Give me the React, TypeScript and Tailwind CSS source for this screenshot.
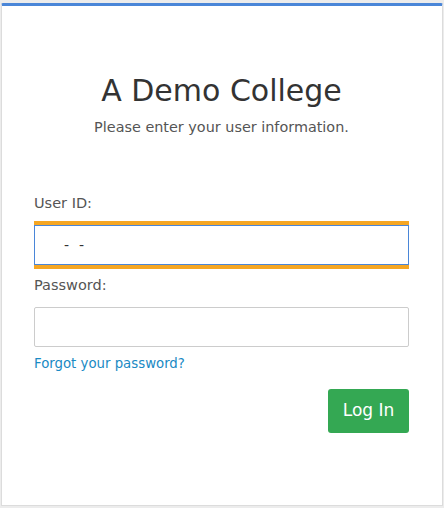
import React from 'react';

const App: React.FC = () => {
  return (
    <div className="min-h-screen bg-[#ececec] px-[1px] pt-[3px] pb-[2px] font-['DejaVu_Sans',Verdana,sans-serif]">
      <div className="h-[503px] bg-white border border-[#dcdcdc] border-t-[3px] border-t-[#4a86d8] rounded-t-[2px] pl-[32px] pr-[33px]">
        <div className="text-center">
          <h1 className="mt-[65px] text-[30px] leading-[40px] text-[#333]">A Demo College</h1>
          <p className="mt-[7px] text-[14.4px] leading-[18px] text-[#555]">Please enter your user information.</p>
        </div>

        {/* User ID */}
        <label className="block mt-[58px] text-[14.5px] leading-[18px] text-[#555]">User ID:</label>
        <div className="mt-[9px] h-[48px] py-[4px] bg-[#f5a623]">
          <div className="h-full bg-white border border-[#4a86d8] px-[12px] flex items-center text-[14px] text-[#333]">
            <span className="ml-[17px]">-</span>
            <span className="ml-[10px]">-</span>
          </div>
        </div>

        {/* Password */}
        <label className="block mt-[7px] text-[14.5px] leading-[18px] text-[#555]">Password:</label>
        <input
          type="password"
          className="block mt-[13px] w-full h-[40px] border border-[#ccc] rounded-[2px] px-[12px] outline-none"
        />
        <a href="#" className="block mt-[9px] text-[13.3px] leading-[16px] text-[#1a8ac4]">
          Forgot your password?
        </a>

        <div className="flex justify-end mt-[17px]">
          <button className="w-[81px] h-[44px] rounded-[3px] bg-[#34a853] text-white text-[17px]">Log In</button>
        </div>
      </div>
    </div>
  );
};

export default App;
